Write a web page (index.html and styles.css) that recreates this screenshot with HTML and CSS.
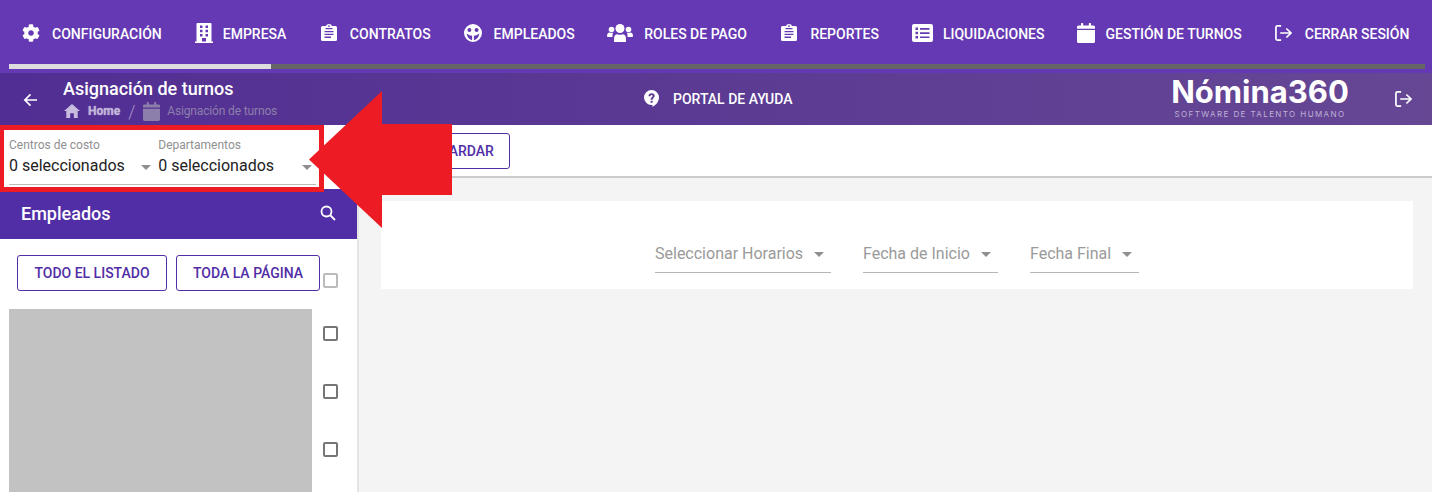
FILE: index.html
```html
<!DOCTYPE html>
<html lang="es"><head>
    <meta charset="UTF-8">
    <meta name="viewport" content="width=device-width, initial-scale=1.0">
    <title>Asignación de turnos</title>
    <link rel="stylesheet" href="styles.css"></head><body>

<!-- menu principal -->
<nav class="top-nav">
    <ul class="nav-list">
        <li class="nav-item">
            <svg class="nav-icon icon-cog" viewBox="0 0 512 512"><path d="M487.4 315.7l-42.6-24.6c4.3-23.2 4.3-47 0-70.2l42.6-24.6c4.9-2.8 7.1-8.6 5.5-14-11.1-35.6-30-67.8-54.7-94.6-3.8-4.1-10-5.1-14.8-2.3L380.8 110c-17.9-15.4-38.5-27.3-60.8-35.1V25.8c0-5.6-3.9-10.5-9.4-11.7-36.7-8.2-74.3-7.8-109.2 0-5.5 1.2-9.4 6.1-9.4 11.7V75c-22.2 7.9-42.8 19.8-60.8 35.1L88.7 85.5c-4.9-2.8-11-1.9-14.8 2.3-24.7 26.7-43.6 58.9-54.7 94.6-1.7 5.4.6 11.2 5.5 14L67.3 221c-4.3 23.2-4.3 47 0 70.2l-42.6 24.6c-4.9 2.8-7.1 8.6-5.5 14 11.1 35.6 30 67.8 54.7 94.6 3.8 4.1 10 5.1 14.8 2.3l42.6-24.6c17.9 15.4 38.5 27.3 60.8 35.1v49.2c0 5.6 3.9 10.5 9.4 11.7 36.7 8.2 74.3 7.8 109.2 0 5.5-1.2 9.4-6.1 9.4-11.7v-49.2c22.2-7.9 42.8-19.8 60.8-35.1l42.6 24.6c4.9 2.8 11 1.9 14.8-2.3 24.7-26.7 43.6-58.9 54.7-94.6 1.5-5.5-.7-11.3-5.6-14.1zM256 336c-44.1 0-80-35.9-80-80s35.9-80 80-80 80 35.9 80 80-35.9 80-80 80z"/></svg>
            <span>Configuración</span>
        </li>
        <li class="nav-item">
            <svg class="nav-icon icon-building" viewBox="0 0 18 20"><path fill-rule="evenodd" d="M0 18.500h1.500V1q0-1 1-1h13q1 0 1 1v17.500H18V20H0zM5 2.500V5h2.500V2.500zm5.500 0V5H13V2.500zM5 6.800v2.500h2.500V6.800zm5.500 0v2.500H13V6.800zM5 11v2.500h2.500V11zm5.500 0v2.500H13V11zM7 18.500h4V15H7z"/></svg>
            <span>Empresa</span>
        </li>
        <li class="nav-item">
            <svg class="nav-icon icon-clip" viewBox="0 0 16 17"><path fill-rule="evenodd" d="M1.500 2H5Q5.500 0 8 0t3 2h3.500Q16 2 16 3.500v12q0 1.500-1.500 1.500h-13Q0 17 0 15.500v-12Q0 2 1.500 2zM8 1.200a.9.9 0 1 0 0 1.800.9.9 0 0 0 0-1.800zM3.500 7v1.300h9V7zm0 2.800v1.300h9V9.800zm0 2.800v1.300H10v-1.300zM4.500 4v1.300h7V4z"/></svg>
            <span>Contratos</span>
        </li>
        <li class="nav-item">
            <svg class="nav-icon icon-face" viewBox="0 0 20 20"><path fill-rule="evenodd" d="M10 0a10 10 0 1 1 0 20 10 10 0 0 1 0-20zM6 4.500a2.200 2.200 0 1 0 0 4.400 2.200 2.200 0 0 0 0-4.400zm8 0a2.200 2.200 0 1 0 0 4.400 2.200 2.200 0 0 0 0-4.400zM3 10.500q.5 5.500 6 7.500v-5q-3 0-6-2.500zm14 0q-3 2.500-6 2.500v5q5.500-2 6-7.500z"/></svg>
            <span>Empleados</span>
        </li>
        <li class="nav-item">
            <svg class="nav-icon icon-users" viewBox="0 0 26 18"><circle cx="13" cy="4.500" r="4.500"/><circle cx="4.500" cy="5.500" r="2.800"/><circle cx="21.500" cy="5.500" r="2.800"/><path d="M7 18v-3q0-4.800 3.500-4.800 2.500 1 5 0Q19 10.200 19 15v3q0 0-1 0H8q-1 0-1 0zM0 12q0-3.500 2.800-3.500 1.700.8 3.400.1Q5.300 10 5.500 13H1q-1 0-1-1zm26 0q0-3.500-2.800-3.500-1.700.8-3.400.1 .9 1.400.7 4.400h4.500q1 0 1-1z"/></svg>
            <span>Roles de pago</span>
        </li>
        <li class="nav-item">
            <svg class="nav-icon icon-clip" viewBox="0 0 16 17"><path fill-rule="evenodd" d="M1.500 2H5Q5.500 0 8 0t3 2h3.500Q16 2 16 3.500v12q0 1.500-1.500 1.500h-13Q0 17 0 15.500v-12Q0 2 1.500 2zM8 1.200a.9.9 0 1 0 0 1.800.9.9 0 0 0 0-1.800zM3.500 7v1.300h9V7zm0 2.800v1.300h9V9.800zm0 2.800v1.300H10v-1.300zM4.500 4v1.300h7V4z"/></svg>
            <span>Reportes</span>
        </li>
        <li class="nav-item">
            <svg class="nav-icon icon-list" viewBox="0 0 21 18"><path fill-rule="evenodd" d="M2 0h17q2 0 2 2v14q0 2-2 2H2q-2 0-2-2V2q0-2 2-2zM3.500 3.500V6H6V3.500zm4.500.500v1.700h9.500V4zM3.500 7.800v2.500H6V7.800zM8 8.200v1.700h9.500V8.200zM3.500 12v2.500H6V12zm4.500.400v1.700h9.500v-1.700z"/></svg>
            <span>Liquidaciones</span>
        </li>
        <li class="nav-item">
            <svg class="nav-icon icon-calendar" viewBox="0 0 18 20"><path d="M0 7h18v11.500q0 1.500-1.500 1.500h-15Q0 20 0 18.500zM1.500 2.500H4V.7q0-.7.700-.7h.800q.7 0 .7.700v1.800h5.600V.7q0-.7.700-.7h.8q.7 0 .7.700v1.800h2.500Q18 2.500 18 4v1.700H0V4q0-1.500 1.500-1.500z"/></svg>
            <span>Gestión de turnos</span>
        </li>
        <li class="nav-item">
            <svg class="nav-icon icon-exit" viewBox="0 0 18 18" preserveAspectRatio="none"><path class="line-icon" d="M6.500 1H2.500Q1 1 1 2.500v13Q1 17 2.500 17h4M5.500 9H17M12 4l5 5-5 5"/></svg>
            <span>Cerrar sesión</span>
        </li>
    </ul>
    <div class="progress"><div class="progress-done"></div></div>
</nav>

<header class="page-header">
    <div class="header-left">
        <svg class="back-icon" viewBox="0 0 16 16"><path class="line-icon" d="M15 8H2M8 2L2 8l6 6"/></svg>
        <div>
            <h1 class="page-title">Asignación de turnos</h1>
            <div class="crumbs">
                <svg class="crumb-home" viewBox="0 0 16 14"><path d="M8 0l8 7h-2.300v7H9.800V9.300H6.200V14H2.300V7H0z"/></svg>
                <span class="crumb-link">Home</span>
                <span class="crumb-sep">/</span>
                <svg class="crumb-cal" viewBox="0 0 18 20"><path d="M0 7h18v11.500q0 1.500-1.500 1.500h-15Q0 20 0 18.500zM1.500 2.500H4V.7q0-.7.700-.7h.800q.7 0 .7.700v1.800h5.600V.7q0-.7.700-.7h.8q.7 0 .7.700v1.800h2.500Q18 2.500 18 4v1.700H0V4q0-1.500 1.500-1.500z"/></svg>
                <span class="crumb-current">Asignación de turnos</span>
            </div>
        </div>
    </div>
    <div class="help-link">
        <svg class="help-icon" viewBox="0 0 16 18"><path fill-rule="evenodd" d="M8 0a8 8 0 0 1 8 8q0 6-7 10v-2H8A8 8 0 0 1 8 0zM7 11.300v2.200h2.200v-2.200zM4.800 6.500h2.100q.1-1.300 1.200-1.300 1.100 0 1.100 1 0 .7-1 1.400Q7 8.500 7 10.300h2.100q0-1 .9-1.700 1.400-1 1.400-2.500 0-2.800-3.300-2.800-3.100 0-3.300 2.700z"/></svg>
        <span>Portal de ayuda</span>
    </div>
    <div class="header-right">
        <div class="logo">
            <div class="logo-name">Nómina360</div>
            <div class="logo-sub">Software de talento humano</div>
        </div>
        <svg class="logout-icon" viewBox="0 0 18 18" preserveAspectRatio="none"><path class="line-icon" d="M6.500 1H2.500Q1 1 1 2.500v13Q1 17 2.500 17h4M5.500 9H17M12 4l5 5-5 5"/></svg>
    </div>
</header>

<div class="layout">
    <aside class="sidebar">
        <div class="filters">
            <div class="filter filter-cost">
                <label>Centros de costo</label>
                <div class="filter-value">0 seleccionados<span class="caret"></span></div>
            </div>
            <div class="filter filter-dept">
                <label>Departamentos</label>
                <div class="filter-value">0 seleccionados<span class="caret"></span></div>
            </div>
        </div>
        <div class="side-title">
            <h2>Empleados</h2>
            <svg class="search-icon" viewBox="0 0 16 16"><path class="line-icon" d="M10 10l5 5"/><circle class="line-icon" cx="6.500" cy="6.500" r="5"/></svg>
        </div>
        <div class="select-row">
            <button class="btn btn-all">Todo el listado</button>
            <button class="btn btn-page">Toda la página</button>
            <span class="check check-off"></span>
        </div>
        <div class="employee-list">
            <div class="employee-block"></div>
            <div class="employee-checks">
                <span class="check"></span>
                <span class="check"></span>
                <span class="check"></span>
            </div>
        </div>
    </aside>

    <main class="content">
        <div class="toolbar">
            <button class="btn btn-save">Guardar</button>
        </div>
        <div class="card">
            <div class="field field-hours">Seleccionar Horarios<span class="caret"></span></div>
            <div class="field field-start">Fecha de Inicio<span class="caret"></span></div>
            <div class="field field-end">Fecha Final<span class="caret"></span></div>
        </div>
    </main>
</div>

<!-- anotacion roja del manual -->
<div class="mark-box"></div>
<svg class="mark-arrow" viewBox="0 0 143 137"><path d="M0 68.500L73 0v33h70v71H73v33z"/></svg>

</body></html>
```

FILE: styles.css
```css
* {
    box-sizing: border-box;
}
html, body {
    height: 492px;
    overflow: hidden;
}
body {
    margin: 0;
    font-family: Roboto, Arial, sans-serif;
    background-color: #f4f4f4;
    color: #222;
    position: relative;
}
h1, h2 {
    margin: 0;
}
button {
    font-family: inherit;
}

/* menu */
.top-nav {
    height: 73px;
    background-color: #6539b3;
    padding-top: 23px;
}
.nav-list {
    list-style: none;
    margin: 0;
    padding: 0 0 0 22px;
    display: flex;
    gap: 33px;
    height: 41px;
}
.nav-item {
    display: flex;
    align-items: flex-start;
    height: 22px;
    color: #fff;
    font-size: 14px;
    font-weight: 500;
    line-height: 22px;
    text-transform: uppercase;
    white-space: nowrap;
}
.nav-icon {
    fill: #fff;
    display: block;
}
.icon-cog { width: 18px; height: 18px; margin: 1px 12px 0 0; }
.icon-building { width: 18px; height: 20px; margin: 0 10px 0 0; }
.icon-clip { width: 16px; height: 17px; margin: 1px 13px 0 1.500px; }
.icon-face { width: 18px; height: 18px; margin: 1px 12px 0 0; }
.icon-users { width: 26px; height: 18px; margin: 1px 11px 0 -.500px; }
.icon-list { width: 21px; height: 18px; margin: 1px 10px 0 0; }
.icon-calendar { width: 18px; height: 20px; margin: 0 11px 0 -1px; }
.icon-exit { width: 17px; height: 16px; margin: 2px 13px 0 0; }
.line-icon {
    fill: none;
    stroke: #fff;
    stroke-width: 1.800;
}
.progress {
    margin: 0 7px 0 9px;
    height: 5px;
    background-color: #666;
}
.progress-done {
    width: 262px;
    height: 5px;
    background-color: #ddd;
}

/* cabecera de la pagina */
.page-header {
    height: 52px;
    display: flex;
    justify-content: space-between;
    background: linear-gradient(90deg, #512e93, #664794);
    color: #fff;
}
.header-left {
    width: 644px;
    display: flex;
    padding: 6px 0 0 23px;
}
.back-icon {
    width: 15px;
    height: 16px;
    margin: 13px 25px 0 0;
}
.page-title {
    font-size: 18px;
    font-weight: 500;
    line-height: 20px;
}
.crumbs {
    display: flex;
    align-items: center;
    height: 20px;
    margin-top: 2px;
    font-size: 12px;
}
.crumb-home {
    width: 16px;
    height: 14px;
    fill: #c8bcdf;
    margin: 0 8px 0 1px;
}
.crumb-link {
    font-weight: 700;
    color: #c0b4da;
    text-shadow: 0 0 1px #c0b4da;
}
.crumb-sep {
    margin: 0 8px 0 8px;
    font-size: 18px;
    font-weight: 300;
    color: #a695c9;
}
.crumb-cal {
    width: 17px;
    height: 19px;
    fill: #8d7fab;
    margin-right: 7px;
}
.crumb-current {
    color: #8d7fab;
    letter-spacing: -.15px;
}
.help-link {
    flex: 1;
    display: flex;
    align-items: flex-start;
    padding-top: 16px;
    font-size: 14px;
    font-weight: 500;
    line-height: 20px;
    text-transform: uppercase;
}
.help-icon {
    width: 15px;
    height: 17px;
    fill: #fff;
    margin: 1px 14px 0 0;
}
.header-right {
    display: flex;
    padding-right: 20px;
}
.logo {
    width: 180px;
    margin-right: 45px;
    padding-top: 2px;
    text-align: center;
}
.logo-name {
    font-family: Inter, Arial, sans-serif;
    font-size: 31px;
    font-weight: 700;
    line-height: 30px;
    margin-top: 2px;
    height: 30px;
}
.logo-sub {
    margin-top: 3px;
    font-family: Inter, Arial, sans-serif;
    font-size: 8px;
    line-height: 8px;
    letter-spacing: 1.400px;
    text-transform: uppercase;
    color: #bdb2d6;
}
.logout-icon {
    width: 17px;
    height: 16px;
    margin-top: 18px;
}

/* cuerpo */
.layout {
    display: flex;
    height: 367px;
}
.sidebar {
    width: 359px;
    background-color: #fff;
    border-right: 2px solid #e4e4e4;
    overflow: hidden;
}
.filters {
    height: 64px;
    padding-top: 13px;
    margin: 0 41px 0 9px;
    position: relative;
    display: flex;
}
.filters::after {
    content: "";
    position: absolute;
    left: 0;
    right: 0;
    top: 59px;
    height: 1px;
    background-color: #bbb;
}
.filter label {
    display: block;
    font-size: 12px;
    line-height: 14px;
    color: #8f8f8f;
}
.filter-cost { width: 149px; }
.filter-dept { width: 158px; margin-left: .500px; }
.filter-value {
    position: relative;
    margin-top: 3px;
    font-size: 16px;
    line-height: 22px;
    color: #222;
}
.filter-value .caret {
    position: absolute;
    right: 6px;
    top: 10px;
}
.filter-cost .caret {
    right: 7px;
}
.filter-dept .caret {
    right: 4px;
}
.caret {
    display: inline-block;
    width: 0;
    height: 0;
    border-left: 5px solid transparent;
    border-right: 5px solid transparent;
    border-top: 5px solid #8f8f8f;
}
.side-title {
    height: 50px;
    background-color: #512ea6;
    color: #fff;
    display: flex;
    align-items: center;
    justify-content: space-between;
    padding: 0 21px 2px;
}
.side-title h2 {
    font-size: 18px;
    font-weight: 500;
}
.search-icon {
    width: 16px;
    height: 16px;
    margin: -1px 0 0 0;
}
.select-row {
    display: flex;
    padding: 16px 0 0 17px;
    height: 70px;
}
.btn {
    height: 36px;
    padding: 0;
    background-color: #fff;
    border: 1px solid #512ea6;
    border-radius: 3px;
    color: #512ea6;
    font-size: 14px;
    font-weight: 500;
    text-transform: uppercase;
}
.btn-all {
    width: 150px;
    margin-right: 9px;
}
.btn-page {
    width: 144px;
    margin-right: 3px;
}
.check {
    display: block;
    width: 15px;
    height: 15px;
    border: 2px solid #767676;
    border-radius: 2px;
    background-color: #fff;
}
.check-off {
    margin-top: 18px;
    border-color: #bbb;
}
.employee-list {
    display: flex;
    padding-left: 9px;
}
.employee-block {
    width: 303px;
    height: 183px;
    background-color: #c2c2c2;
}
.employee-checks {
    display: flex;
    flex-direction: column;
    gap: 43px;
    margin: 17px 0 0 11px;
}

.content {
    flex: 1;
    min-width: 0;
}
.toolbar {
    height: 53px;
    padding: 8px 0 0 55px;
    background-color: #fff;
    border-bottom: 2px solid #ccc;
}
.btn-save {
    width: 96px;
}
.card {
    margin: 23px 19px 0 22px;
    height: 88px;
    padding: 36px 0 0 274px;
    background-color: #fff;
    display: flex;
    gap: 32px;
}
.field {
    height: 36px;
    padding-bottom: 2px;
    font-size: 16px;
    color: #9a9a9a;
    border-bottom: 1px solid #b5b5b5;
    display: flex;
    justify-content: space-between;
    align-items: center;
}
.field .caret {
    margin-top: 2px;
}
.field-hours { width: 176px; padding-right: 7px; }
.field-start { width: 135px; padding-right: 7px; }
.field-end { width: 109px; padding-right: 7px; }

/* anotacion */
.mark-box {
    position: absolute;
    left: 0;
    top: 125px;
    width: 324px;
    height: 67px;
    border: solid #ed1c24;
    border-width: 5px 5px 5px 4px;
}
.mark-arrow {
    position: absolute;
    left: 309px;
    top: 91px;
    width: 143px;
    height: 137px;
    fill: #ed1c24;
}
```
